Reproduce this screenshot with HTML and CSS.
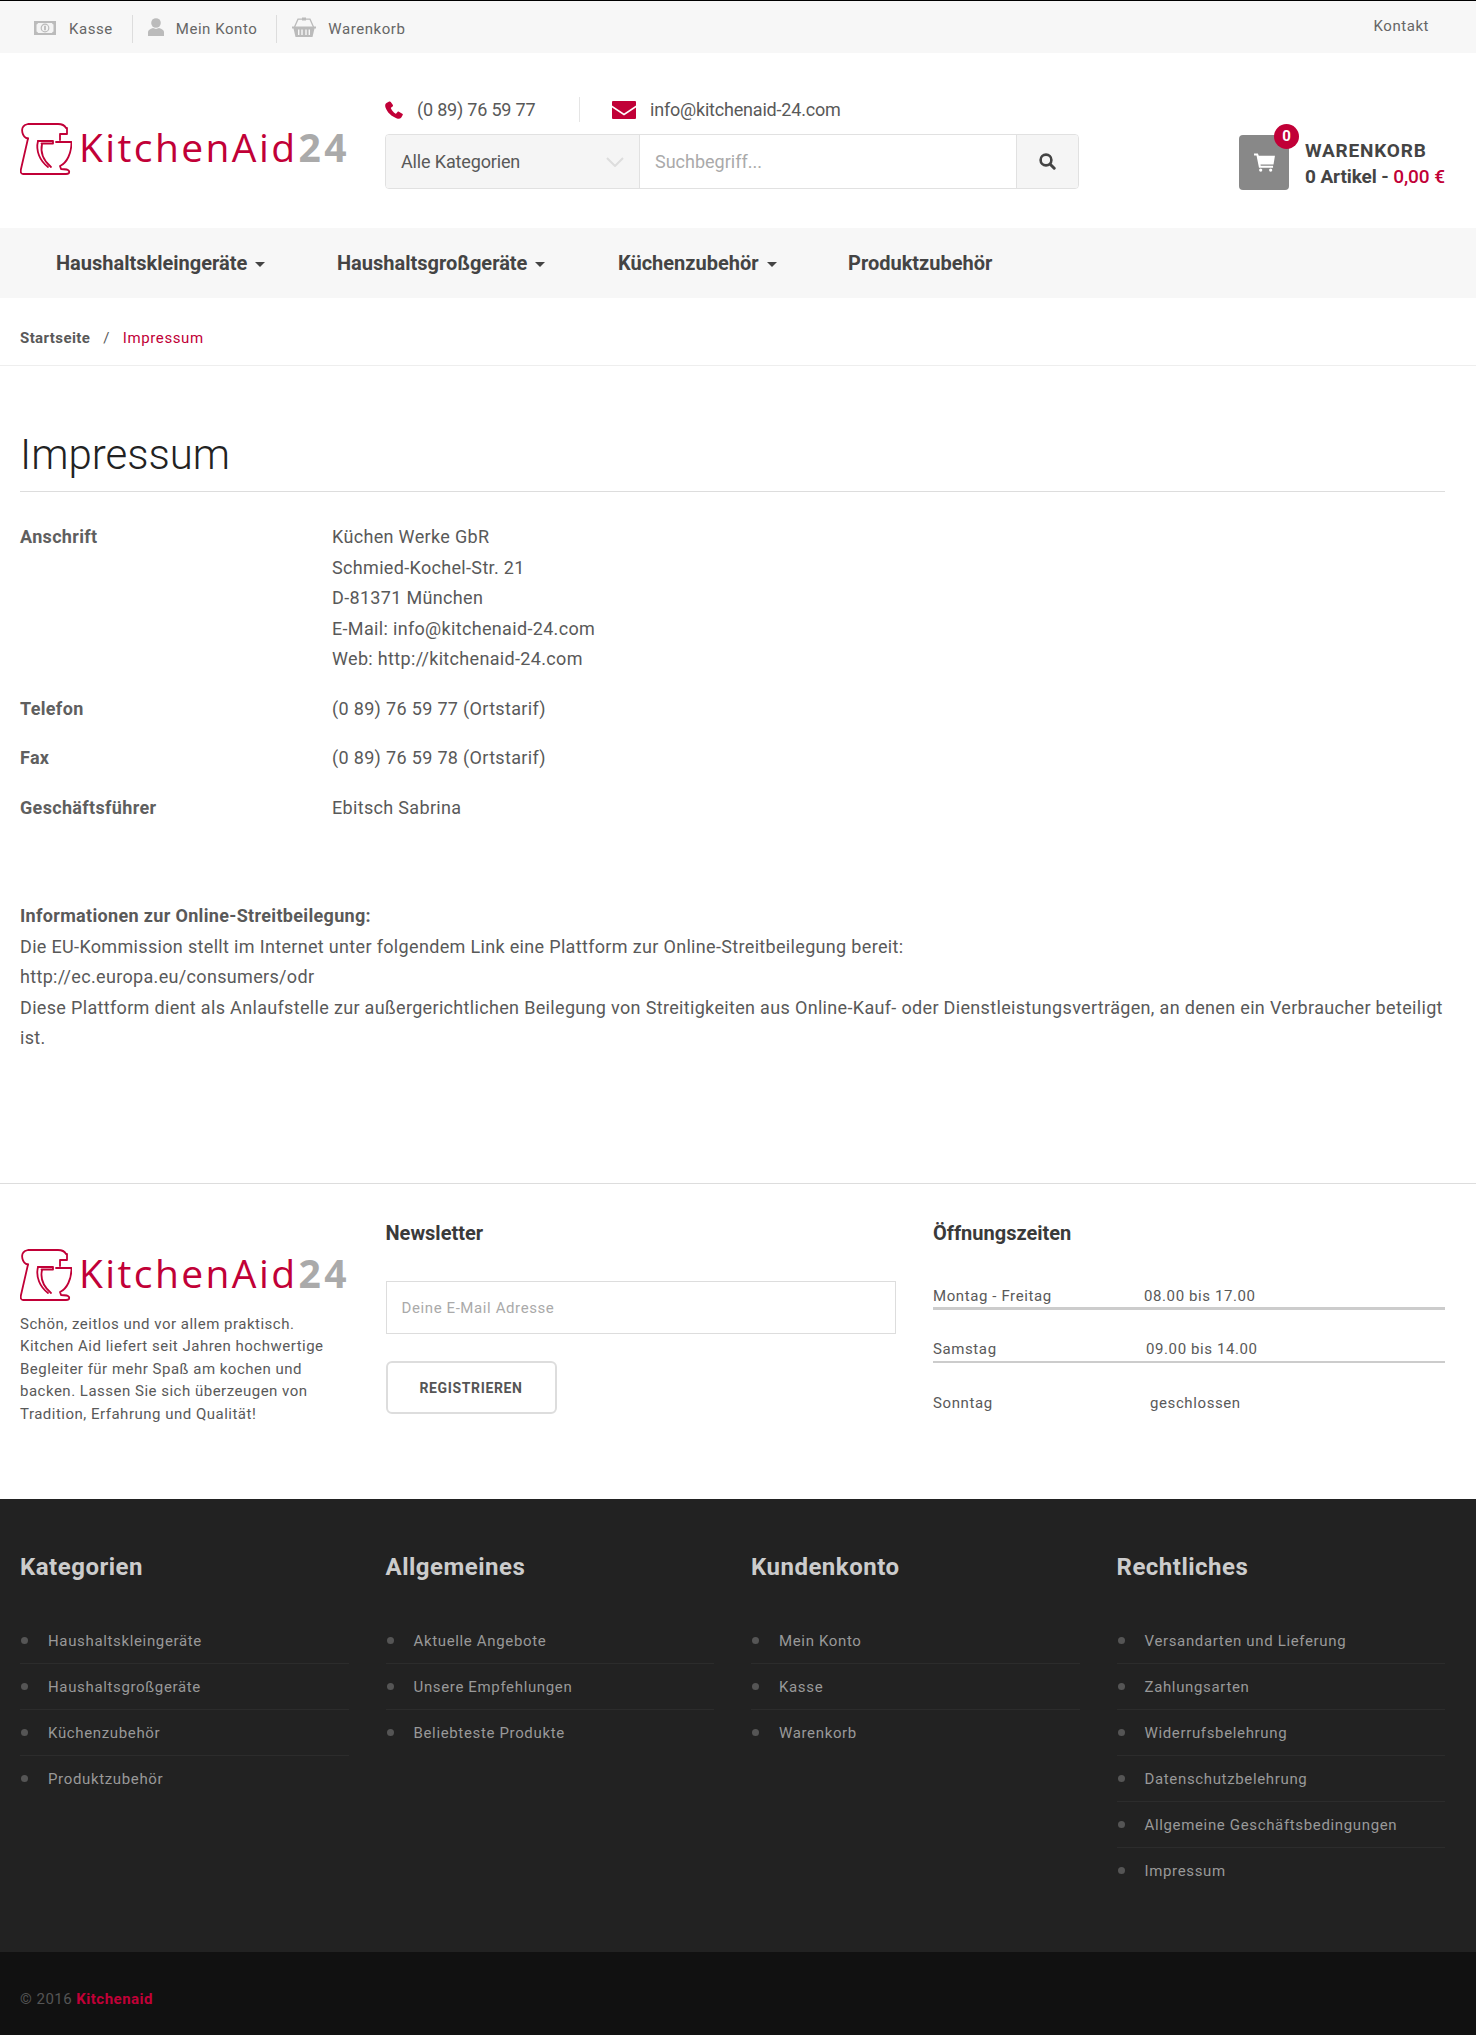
FILE: index.html
```html
<!DOCTYPE html>
<html lang="de">
<head>
<meta charset="utf-8">
<title>Impressum</title>
<link rel="stylesheet" href="styles.css">
</head>
<body>
<svg class="defs" width="0" height="0" aria-hidden="true">
  <symbol id="mixer" viewBox="0 0 52 52">
    <g fill="none" stroke="#c10037" stroke-width="1.8" stroke-linejoin="round" stroke-linecap="round">
      <path d="M8 15.500C2 14.500 0 5 5 2L8 1H38C42 1 45 3 46 5H47V11H40V17"/>
      <path d="M8 15.500L1 46Q0 51 3 51H46Q50 51 49 48Q48 46 41 46L40 43C47 40 51.500 30 51.500 19H36"/>
      <path d="M18 18H33V20.500H21.500"/>
      <path d="M18 18C15.500 28 20 38 28 44"/>
      <path d="M22 21C20 30 24 38 31 44"/>
    </g>
  </symbol>
</svg>

<header class="topbar">
  <ul class="toplinks">
    <li><svg class="ic-money" viewBox="0 0 22 14"><path fill="#bbb" d="M0 0h22v14H0z"/><path fill="#f4f4f4" d="M4 2h14a2 2 0 0 0 1.500 1.500v7A2 2 0 0 0 18 12H4A2 2 0 0 0 2.500 10.500v-7A2 2 0 0 0 4 2z"/><circle cx="11" cy="7" r="3.800" fill="none" stroke="#bbb" stroke-width="1.200"/><path fill="#aaa" d="M10.300 4.800h1.400v4.400h-1.400z"/></svg><a>Kasse</a></li>
    <li><svg class="ic-user" viewBox="0 0 16 18"><circle cx="8" cy="5" r="4.800" fill="#bbb"/><path fill="#bbb" d="M0 18v-4c0-2 2-3 5-4l3 1 3-1c3 1 5 2 5 4v4z"/></svg><a>Mein Konto</a></li>
    <li><svg class="ic-basket" viewBox="0 0 24 20"><path fill="none" stroke="#bbb" stroke-width="1.300" d="M2.500 10L6 2.200H18L21.500 10"/><path fill="#bbb" d="M10 .6h4v3h-4zM0 9.500h24v2h-1.500L20.500 20h-17L1.500 11.500H0z"/><path fill="#f7f7f7" d="M6 12.500h1.400v5.500H6zM9.300 12.500h1.400v5.500H9.300zM13.300 12.500h1.400v5.500h-1.400zM16.600 12.500H18v5.500h-1.400z"/></svg><a>Warenkorb</a></li>
  </ul>
  <a class="contact">Kontakt</a>
</header>

<div class="masthead">
  <a class="logo"><svg class="logo-mark"><use href="#mixer"/></svg><span class="logo-name">KitchenAid</span><span class="logo-num">24</span></a>
  <div class="search-col">
    <div class="contact-row">
      <div class="contact-item phone"><svg class="ic-phone" viewBox="0 0 18 18"><path fill="#c10037" d="M4.200.6 1.500 2C.3 2.800-.2 4.500.5 6.500 2.300 11.500 6.500 15.500 12 17.400c1.800.5 3.300.2 4.300-1l1.400-2.300c.3-.6.1-1.100-.4-1.400l-3.400-2c-.5-.3-1-.2-1.400.2l-1.300 1.500c-.3.300-.7.300-1 .1-1.800-1.300-3.200-3-4.200-5-.2-.3-.1-.7.200-1l1.400-1.100c.4-.4.500-.9.300-1.400L5.800 1C5.500.4 4.800.2 4.200.6z"/></svg><span>(0 89) 76 59 77</span></div>
      <div class="contact-item mail"><svg class="ic-mail" viewBox="0 0 24 18"><path fill="#c10037" d="M1 0h22a1 1 0 0 1 1 1v3.500l-12 8-12-8V1a1 1 0 0 1 1-1zM0 6.500l12 8 12-8V17a1 1 0 0 1-1 1H1a1 1 0 0 1-1-1z"/></svg><span>info@kitchenaid-24.com</span></div>
    </div>
    <form class="search">
      <div class="search-cat"><span>Alle Kategorien</span><svg class="ic-chev" viewBox="0 0 18 10"><path fill="none" stroke="#ddd" stroke-width="2" d="M1 1l8 8 8-8"/></svg></div>
      <div class="search-input">Suchbegriff...</div>
      <div class="search-btn"><svg class="ic-search" viewBox="0 0 17 17"><circle cx="7" cy="7" r="5.400" fill="none" stroke="#444" stroke-width="2.600"/><path stroke="#444" stroke-width="3" stroke-linecap="round" d="M11.200 11.200l4 4"/></svg></div>
    </form>
  </div>
  <div class="cart">
    <div class="cart-box">
      <svg class="ic-cart" viewBox="0 0 22 20"><path fill="#fff" d="M0 .5h4L5 3h17l-1.500 9H6.800l.2 1.500h13v2H5.200L2.600 2.500H0z"/><circle cx="7" cy="18" r="1.700" fill="#fff"/><circle cx="17.500" cy="18" r="1.700" fill="#fff"/></svg>
      <span class="cart-badge">0</span>
    </div>
    <div class="cart-text">
      <div class="cart-title">WARENKORB</div>
      <div class="cart-sum">0 Artikel - <span class="accent">0,00 €</span></div>
    </div>
  </div>
</div>

<nav class="mainnav">
  <a class="nav-a caret">Haushaltskleingeräte</a>
  <a class="nav-b caret">Haushaltsgroßgeräte</a>
  <a class="nav-c caret">Küchenzubehör</a>
  <a class="nav-d">Produktzubehör</a>
</nav>

<div class="crumbs"><a>Startseite</a><span class="crumb-sep">/</span><span class="accent crumb-here">Impressum</span></div>

<main class="content">
  <h1>Impressum</h1>
  <dl class="facts">
    <dt>Anschrift</dt>
    <dd>Küchen Werke GbR<br>Schmied-Kochel-Str. 21<br>D-81371 München<br>E-Mail: info@kitchenaid-24.com<br>Web: http://kitchenaid-24.com</dd>
    <dt>Telefon</dt>
    <dd>(0 89) 76 59 77 (Ortstarif)</dd>
    <dt>Fax</dt>
    <dd>(0 89) 76 59 78 (Ortstarif)</dd>
    <dt>Geschäftsführer</dt>
    <dd>Ebitsch Sabrina</dd>
  </dl>
  <p class="legal"><strong>Informationen zur Online-Streitbeilegung:</strong><br>Die EU-Kommission stellt im Internet unter folgendem Link eine Plattform zur Online-Streitbeilegung bereit:<br>http://ec.europa.eu/consumers/odr<br>Diese Plattform dient als Anlaufstelle zur außergerichtlichen Beilegung von Streitigkeiten aus Online-Kauf- oder Dienstleistungsverträgen, an denen ein Verbraucher beteiligt ist.</p>
</main>

<section class="prefooter">
  <div class="about">
    <a class="logo"><svg class="logo-mark"><use href="#mixer"/></svg><span class="logo-name">KitchenAid</span><span class="logo-num">24</span></a>
    <p>Schön, zeitlos und vor allem praktisch. Kitchen Aid liefert seit Jahren hochwertige Begleiter für mehr Spaß am kochen und backen. Lassen Sie sich überzeugen von Tradition, Erfahrung und Qualität!</p>
  </div>
  <div class="newsletter">
    <h3>Newsletter</h3>
    <div class="nl-input">Deine E-Mail Adresse</div>
    <div class="nl-btn">REGISTRIEREN</div>
  </div>
  <div class="hours">
    <h3>Öffnungszeiten</h3>
    <div class="hour-row thick"><span class="hour-day">Montag - Freitag</span><span>08.00 bis 17.00</span></div>
    <div class="hour-row thin"><span class="hour-day">Samstag</span><span class="hour-sat">09.00 bis 14.00</span></div>
    <div class="hour-row last"><span class="hour-day">Sonntag</span><span class="hour-sun">geschlossen</span></div>
  </div>
</section>

<footer class="darkfoot">
  <div class="foot-col">
    <h4>Kategorien</h4>
    <ul><li>Haushaltskleingeräte</li><li>Haushaltsgroßgeräte</li><li>Küchenzubehör</li><li>Produktzubehör</li></ul>
  </div>
  <div class="foot-col">
    <h4>Allgemeines</h4>
    <ul><li>Aktuelle Angebote</li><li>Unsere Empfehlungen</li><li>Beliebteste Produkte</li></ul>
  </div>
  <div class="foot-col">
    <h4>Kundenkonto</h4>
    <ul><li>Mein Konto</li><li>Kasse</li><li>Warenkorb</li></ul>
  </div>
  <div class="foot-col">
    <h4>Rechtliches</h4>
    <ul><li>Versandarten und Lieferung</li><li>Zahlungsarten</li><li>Widerrufsbelehrung</li><li>Datenschutzbelehrung</li><li>Allgemeine Geschäftsbedingungen</li><li>Impressum</li></ul>
  </div>
</footer>
<div class="copyright"><span>© 2016</span> <strong class="accent">Kitchenaid</strong></div>
</body>
</html>
```
FILE: styles.css
```css
* { box-sizing: border-box; }
html, body { margin: 0; padding: 0; }
body { font-family: Roboto, "Liberation Sans", sans-serif; color: #595959; font-size: 18px; background: #fff; }
.defs { position: absolute; }
.accent { color: #c10037; }
svg { display: block; flex: none; }

.topbar { height: 53px; border-top: 1px solid #000; background: #f7f7f7; display: flex; justify-content: space-between; align-items: center; padding: 3px 47px 0 34px; font-size: 15px; color: #666; letter-spacing: .55px; }
.toplinks { list-style: none; margin: 0; padding: 0; display: flex; align-items: center; }
.toplinks li { display: flex; align-items: center; height: 28px; padding-right: 19px; margin-right: 15px; border-right: 1px solid #ddd; }
.toplinks li:last-child { border: 0; margin: 0; padding: 0; }
.contact { margin-top: -5px; }
.ic-money { width: 22px; height: 14px; margin-right: 13px; margin-top: -2px; }
.ic-user { width: 16px; height: 18px; margin-right: 12px; margin-top: -4px; }
.ic-basket { width: 24px; height: 20px; margin-right: 12px; margin-top: -4px; }

.masthead { height: 175px; display: flex; padding: 0 0 0 20px; }
.logo { display: flex; align-items: flex-end; width: 328px; height: 52px; color: #c10037; flex: none; }
.masthead .logo { margin-top: 70px; margin-right: 37px; }
.logo-mark { width: 52px; height: 52px; margin-right: 7px; }
.logo-name { font-family: "Open Sans", sans-serif; font-size: 39px; line-height: 52px; letter-spacing: 2.4px; height: 50px; margin-top: -2px; align-self: flex-start; }
.logo-num { font-family: "Open Sans", sans-serif; font-weight: 700; font-size: 39px; line-height: 52px; letter-spacing: 3.5px; color: #aaa; margin-left: 1px; height: 50px; margin-top: -2px; align-self: flex-start; }

.search-col { width: 694px; flex: none; padding-top: 44px; }
.contact-row { display: flex; align-items: center; height: 25px; margin-bottom: 12px; font-size: 18px; letter-spacing: -.2px; }
.contact-item { display: flex; align-items: center; height: 25px; }
.phone { width: 195px; border-right: 1px solid #e5e5e5; margin-right: 32px; }
.ic-phone { width: 18px; height: 18px; margin-right: 14px; }
.ic-mail { width: 24px; height: 18px; margin-right: 14px; }
.search { display: flex; height: 55px; border: 1px solid #e1e1e1; border-radius: 4px; overflow: hidden; }
.search-cat { width: 254px; background: #f5f5f5; border-right: 1px solid #e1e1e1; display: flex; align-items: center; justify-content: space-between; padding: 0 15px 0 15px; letter-spacing: -.15px; }
.ic-chev { width: 18px; height: 10px; }
.search-input { flex: 1; display: flex; align-items: center; padding-left: 15px; color: #aaa; }
.search-btn { width: 62px; background: #f5f5f5; border-left: 1px solid #e1e1e1; display: flex; align-items: center; justify-content: center; }
.ic-search { width: 17px; height: 17px; }

.cart { display: flex; flex: none; margin-left: 160px; padding-top: 82px; }
.cart-box { position: relative; width: 50px; height: 55px; background: #888; border-radius: 4px; display: flex; align-items: center; justify-content: center; margin-right: 16px; }
.ic-cart { width: 21px; height: 19px; }
.cart-badge { position: absolute; top: -11px; right: -10px; width: 25px; height: 25px; border-radius: 50%; background: #c10037; color: #fff; font-size: 15px; font-weight: 700; text-align: center; line-height: 25px; }
.cart-text { font-weight: 700; font-size: 19px; color: #444; white-space: nowrap; padding-top: 3px; }
.cart-title { line-height: 26px; letter-spacing: .8px; }
.cart-sum { line-height: 26px; letter-spacing: -.1px; }
.cart-sum .accent { font-weight: 500; }

.mainnav { height: 70px; background: #f7f7f7; display: flex; align-items: center; font-size: 20px; font-weight: 700; color: #444; padding-left: 56px; }
.nav-a { width: 281px; }
.nav-b { width: 281px; }
.nav-c { width: 230px; }
.caret::after { content: ""; display: inline-block; margin-left: 8px; vertical-align: 3px; border-top: 5px solid #444; border-left: 5px solid transparent; border-right: 5px solid transparent; }

.crumbs { height: 68px; border-bottom: 1px solid #eee; padding: 12px 0 0 20px; display: flex; align-items: center; font-size: 15px; letter-spacing: .4px; }
.crumbs a { font-weight: 700; }
.crumb-sep { margin: 0 13px; }
.crumb-here { letter-spacing: .6px; }

.content { padding: 60px 31px 0 20px; height: 817px; }
h1 { margin: 0; font-weight: 300; font-size: 42px; line-height: 58px; height: 66px; border-bottom: 1px solid #ddd; color: #222; }
.facts { display: grid; grid-template-columns: 312px 1fr; margin: 30px 0 0; row-gap: 19px; line-height: 30.5px; letter-spacing: .33px; }
.facts dt { font-weight: 700; color: #5f5f5f; }
.facts dd { margin: 0; }
.legal { margin: 78px 0 0; line-height: 30.5px; letter-spacing: .33px; }

.prefooter { height: 316px; border-top: 1px solid #ddd; display: grid; grid-template-columns: 328.5px 510.5px 512px; column-gap: 37px; padding: 0 31px 0 20px; }
.about { padding-top: 65px; }
.about p { margin: 12px 0 0; font-size: 15px; line-height: 22.4px; letter-spacing: .5px; }
h3 { margin: 37px 0 0; font-size: 20px; line-height: 24px; font-weight: 700; color: #3a3a3a; }
.nl-input { margin-top: 36px; height: 53px; border: 1px solid #ddd; display: flex; align-items: center; padding-left: 15px; font-size: 15px; color: #aaa; letter-spacing: .6px; }
.nl-btn { margin-top: 27px; width: 171px; height: 53px; border: 2px solid #ddd; border-radius: 6px; display: flex; align-items: center; justify-content: center; font-size: 14px; font-weight: 700; color: #555; letter-spacing: .65px; }
.hour-row { display: flex; font-size: 15px; height: 53px; align-items: flex-end; padding-bottom: 3px; letter-spacing: .6px; }
.hours h3 + .hour-row { margin-top: 12px; }
.hour-day { width: 211px; }
.hour-sat { margin-left: 2px; }
.hour-sun { margin-left: 6px; }
.thick { border-bottom: 3px solid #ccc; padding-bottom: 2px; }
.thin { border-bottom: 2px solid #ccc; }
.last { padding-bottom: 4px; }

.darkfoot { height: 453px; background: #222; display: grid; grid-template-columns: repeat(4, 328.5px); column-gap: 37px; padding: 0 31px 0 20px; }
h4 { margin: 52px 0 0; font-size: 24px; line-height: 32px; font-weight: 700; color: #ccc; letter-spacing: .5px; }
.darkfoot ul { list-style: none; margin: 35px 0 0; padding: 0; font-size: 15px; color: #999; letter-spacing: .65px; }
.darkfoot li { position: relative; height: 46px; line-height: 46px; padding-left: 28px; border-bottom: 1px solid #2c2c2c; }
.darkfoot li:last-child { border: 0; }
.darkfoot li::before { content: ""; position: absolute; left: 1px; top: 19px; width: 7px; height: 7px; border-radius: 50%; background: #555; }

.copyright { height: 83px; background: #111; display: flex; align-items: center; gap: 4px; padding: 10px 0 0 20px; font-size: 15px; color: #555; letter-spacing: .5px; }
```
